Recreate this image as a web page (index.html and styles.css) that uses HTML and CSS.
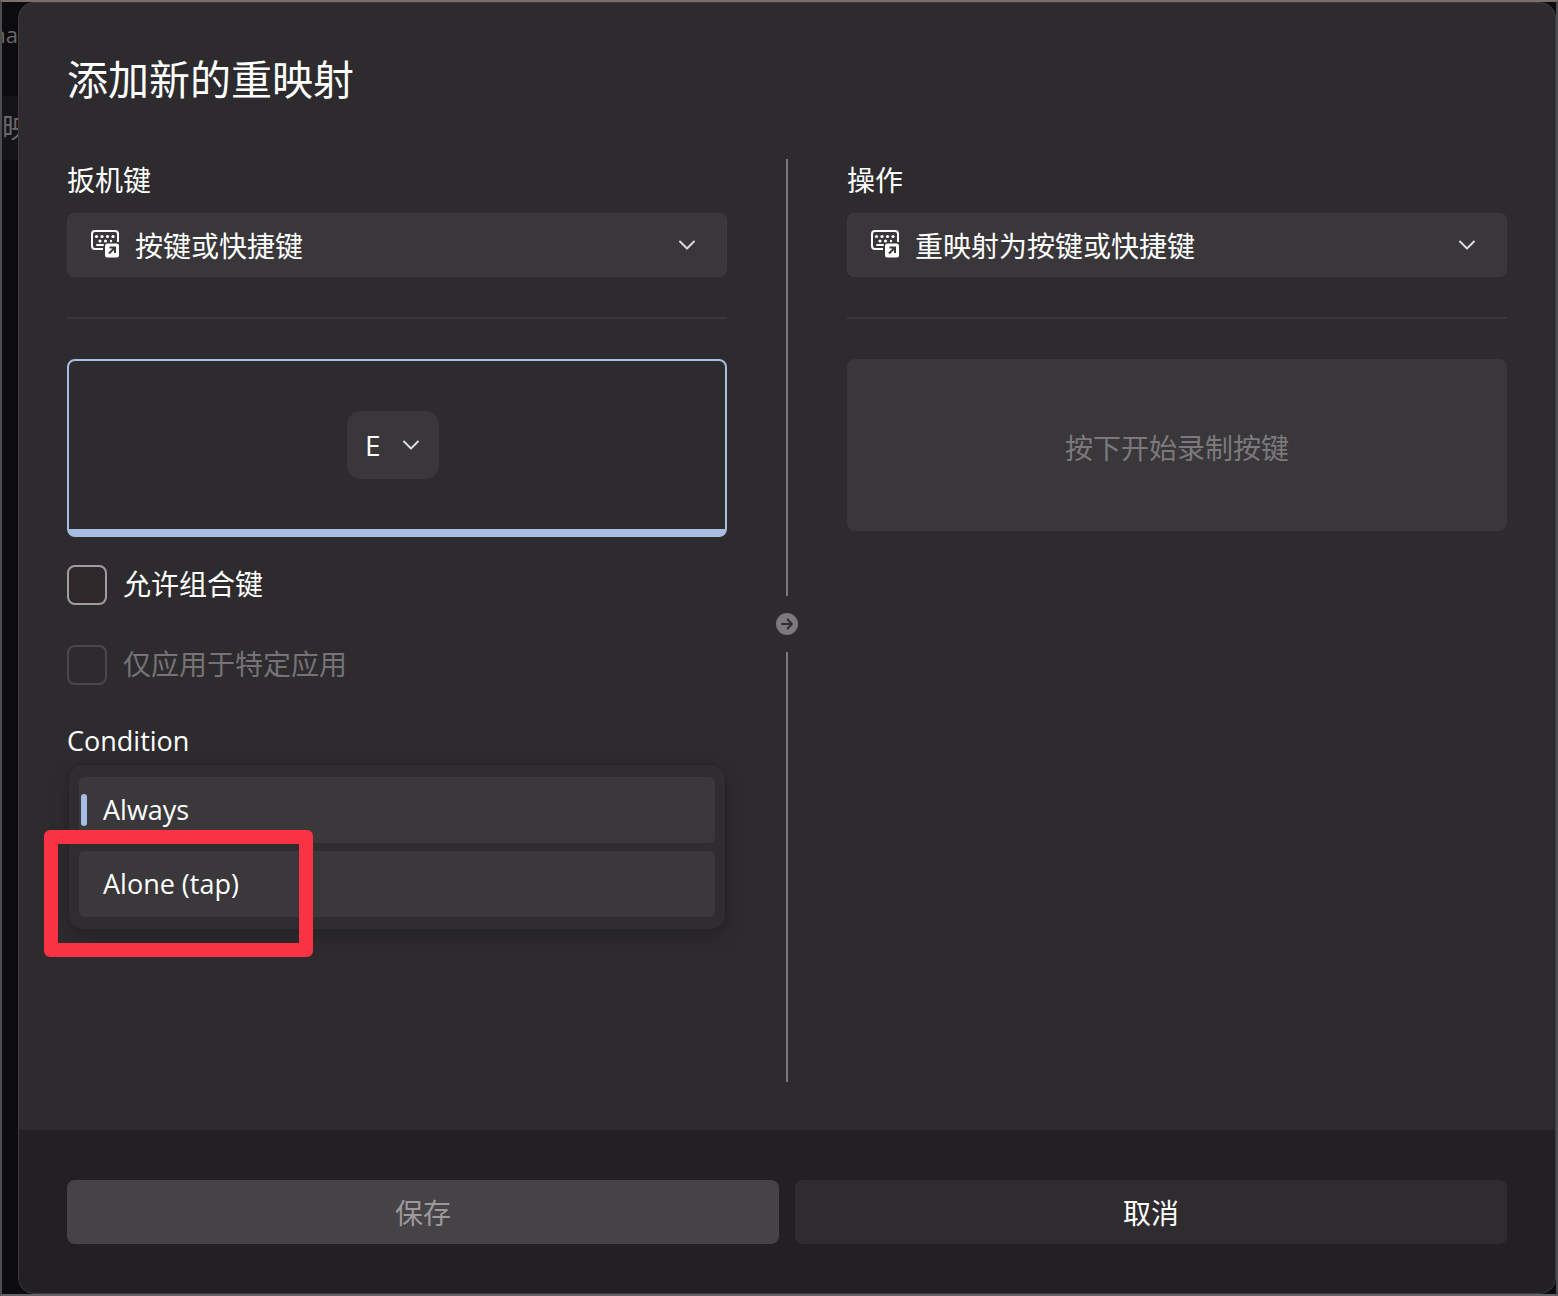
FILE: index.html
```html
<!DOCTYPE html>
<html lang="zh-CN">
<head>
<meta charset="utf-8">
<meta name="viewport" content="width=device-width, initial-scale=1">
<title>添加新的重映射</title>
<link rel="stylesheet" href="styles.css">
</head>
<body>
<svg width="0" height="0" class="sprite" aria-hidden="true">
  <symbol id="keyboard" viewBox="0 0 28 28">
    <path d="M27 12V4a3 3 0 0 0-3-3H4a3 3 0 0 0-3 3v12a3 3 0 0 0 3 3h8" fill="none" stroke="currentColor" stroke-width="2"/>
    <g fill="currentColor">
      <circle cx="5.500" cy="6.500" r="1.600"/><circle cx="11" cy="6.500" r="1.600"/><circle cx="16.500" cy="6.500" r="1.600"/><circle cx="22" cy="6.500" r="1.600"/>
      <circle cx="9" cy="11" r="1.600"/><circle cx="14.500" cy="11" r="1.600"/><circle cx="20" cy="11" r="1.200"/>
      <rect x="5" y="14" width="8" height="2" rx="1"/>
      <rect x="14" y="13.500" width="14" height="14" rx="2.500"/>
    </g>
    <path d="M18 23.500l6-6M18.500 17.500H24V23" fill="none" stroke="#39373a" stroke-width="2"/>
  </symbol>
  <symbol id="chevron" viewBox="0 0 18 18">
    <path d="M2 5.500 9 12.500l7-7" fill="none" stroke="currentColor" stroke-width="2" stroke-linecap="round" stroke-linejoin="round"/>
  </symbol>
</svg>
<div class="window">
  <aside class="behind" aria-hidden="true">
    <p class="behind-title">na</p>
    <p class="behind-row">映</p>
  </aside>
  <main class="dialog" role="dialog" aria-labelledby="dialog-title">
    <div class="content">
      <h1 id="dialog-title">添加新的重映射</h1>
      <div class="columns">
        <section class="column">
          <label class="heading" for="trigger">扳机键</label>
          <div class="combo">
            <svg class="combo-icon"><use href="#keyboard"/></svg>
            <select id="trigger"><option>按键或快捷键</option></select>
            <svg class="chevron"><use href="#chevron"/></svg>
          </div>
          <hr>
          <div class="recorder active">
            <div class="key">
              <select aria-label="按键"><option>E</option></select>
              <svg class="chevron"><use href="#chevron"/></svg>
            </div>
          </div>
          <label class="check"><input type="checkbox"><span>允许组合键</span></label>
          <label class="check disabled"><input type="checkbox" disabled><span>仅应用于特定应用</span></label>
          <p class="condition" id="condition">Condition</p>
          <div class="listbox" role="listbox" aria-labelledby="condition">
            <button type="button" class="option selected" role="option" aria-selected="true">Always</button>
            <div class="option-wrap">
              <button type="button" class="option" role="option" aria-selected="false">Alone (tap)</button>
              <span class="highlight"></span>
            </div>
          </div>
        </section>
        <div class="separator">
          <span class="line"></span>
          <svg class="arrow" viewBox="0 0 22 22"><circle cx="11" cy="11" r="11" fill="#7b797c"/><path d="M6 11h10M11.500 6.500 16 11l-4.500 4.500" fill="none" stroke="#2d2b2e" stroke-width="1.800" stroke-linecap="round" stroke-linejoin="round"/></svg>
          <span class="line"></span>
        </div>
        <section class="column">
          <label class="heading" for="action">操作</label>
          <div class="combo">
            <svg class="combo-icon"><use href="#keyboard"/></svg>
            <select id="action"><option>重映射为按键或快捷键</option></select>
            <svg class="chevron"><use href="#chevron"/></svg>
          </div>
          <hr>
          <button type="button" class="recorder idle">按下开始录制按键</button>
        </section>
      </div>
    </div>
    <footer class="footer">
      <button type="button" class="save" disabled>保存</button>
      <button type="button" class="cancel">取消</button>
    </footer>
  </main>
</div>
</body>
</html>
```

FILE: styles.css
```css
* { box-sizing: border-box; }

body {
  margin: 0;
  background: #0c0b0d;
  color: #fff;
  font: 28px/36px "Noto Sans CJK SC", sans-serif;
}

button, select, input { font: inherit; color: inherit; margin: 0; }
button, select { border: 0; border-radius: 8px; }
select { appearance: none; }
.sprite { position: absolute; }

.window {
  display: flex;
  min-height: 100vh;
  border: 2px solid #4d4c4e;
  border-top-color: #7d706a;
  border-bottom-color: #636264;
}

.behind {
  flex: 0 0 16px;
  overflow: hidden;
  color: #69686a;
  white-space: nowrap;
}
.behind p { display: flex; margin: 0; }
.behind-title {
  justify-content: flex-end;
  height: 94px;
  padding-top: 14px;
  font: 22px/36px "Open Sans", sans-serif;
}
.behind-row { height: 64px; padding-top: 12px; background: #151416; }

.dialog {
  flex: 1;
  display: flex;
  flex-direction: column;
  border: 1px solid #3d3b3e;
  border-radius: 16px;
  background: #2d2b2e;
  overflow: hidden;
}

.content {
  flex: 1;
  display: flex;
  flex-direction: column;
  padding: 48px;
}
h1 { margin: 0 0 56px; font-size: 41px; line-height: 52px; font-weight: 400; }

.columns {
  flex: 1;
  display: grid;
  grid-template-columns: 1fr 120px 1fr;
}
.column { display: flex; flex-direction: column; min-width: 0; }
.heading { line-height: 40px; margin-bottom: 14px; }

.combo { position: relative; display: flex; }
.combo select {
  flex: 1;
  height: 64px;
  padding: 0 68px;
  background: #39373a;
  box-shadow: inset 0 0 0 1px #3d3b3e;
}
.combo-icon { position: absolute; left: 24px; top: 17px; width: 28px; height: 28px; }
.chevron { width: 18px; height: 18px; color: #dcdbdc; pointer-events: none; position: absolute; }
.combo .chevron { right: 31px; top: 23px; }

hr { width: 100%; height: 2px; margin: 40px 0; border: 0; background: #39373a; }

.recorder { display: flex; align-items: center; justify-content: center; border-radius: 8px; }
.recorder.active {
  height: 178px;
  padding-right: 8px;
  border: 2px solid #a8bde3;
  border-bottom-width: 8px;
}
.recorder.idle { height: 172px; padding-top: 4px; background: #39373a; color: #7b797c; }

.key { position: relative; display: flex; }
.key select {
  width: 92px;
  height: 68px;
  padding: 0 18px;
  border-radius: 14px;
  background: #39373a;
  font-family: "Open Sans", sans-serif;
}
.key .chevron { right: 19px; top: 25px; }

.check { display: flex; align-items: center; gap: 16px; height: 40px; margin-top: 28px; }
.check + .check { margin-top: 40px; }
.check span { padding-bottom: 4px; }
.check input {
  appearance: none;
  width: 40px;
  height: 40px;
  border: 2px solid #9f9da0;
  border-radius: 8px;
  background: #2f282b;
}
.check.disabled { color: #757376; }
.check.disabled input { border-color: #4a484b; background: none; }

.condition { margin: 38px 0 6px; font: 27px/36px "Open Sans", sans-serif; }

.listbox {
  display: flex;
  flex-direction: column;
  gap: 8px;
  margin: 0 2px;
  padding: 12px 10px;
  border-radius: 14px;
  background: #2f2d30;
  box-shadow: 0 0 2px 1px #272528, 0 8px 16px #252326;
}
.option {
  position: relative;
  width: 100%;
  height: 66px;
  padding: 0 24px;
  border-radius: 6px;
  background: #3a383b;
  text-align: left;
  font: 27px/36px "Open Sans", sans-serif;
}
.selected::before {
  content: "";
  position: absolute;
  left: 2px;
  top: 17px;
  width: 6px;
  height: 32px;
  border-radius: 3px;
  background: #a8bde3;
}
.option-wrap { position: relative; display: flex; }
.highlight {
  position: absolute;
  left: -35px;
  top: -21px;
  width: 269px;
  height: 127px;
  border: 14px solid #fa3344;
  border-radius: 6px;
  pointer-events: none;
}

.separator { display: flex; flex-direction: column; align-items: center; gap: 17px; }
.line { flex: 1 0 0px; width: 2px; background: #7b797c; }
.line:first-child { flex-basis: 6px; }
.arrow { width: 22px; height: 22px; }

.footer {
  display: grid;
  grid-template-columns: 1fr 1fr;
  gap: 16px;
  padding: 50px 48px 49px;
  background: #222023;
}
.footer button { height: 64px; }
.save { background: #454346; color: #9b999c; }
.cancel { background: #2e2c2f; }
```
